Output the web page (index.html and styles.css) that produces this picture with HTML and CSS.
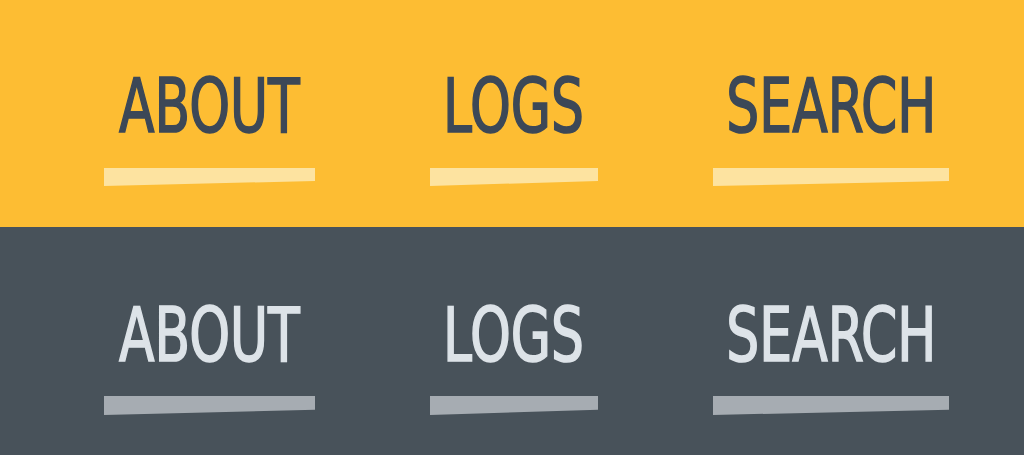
FILE: index.html
```html
<!DOCTYPE html>
<html>
<head>
    <title>Menu Underlines</title>
    <link rel="stylesheet" href="styles.css">
</head>
<body>
<nav class="band band-light">
    <a class="item item-about" href="#about"><span class="label">ABOUT</span><span class="bar"></span></a>
    <a class="item item-logs" href="#logs"><span class="label">LOGS</span><span class="bar"></span></a>
    <a class="item item-search" href="#search"><span class="label">SEARCH</span><span class="bar"></span></a>
</nav>

<nav class="band band-dark">
    <a class="item item-about" href="#about"><span class="label">ABOUT</span><span class="bar"></span></a>
    <a class="item item-logs" href="#logs"><span class="label">LOGS</span><span class="bar"></span></a>
    <a class="item item-search" href="#search"><span class="label">SEARCH</span><span class="bar"></span></a>
</nav>
</body>
</html>
```

FILE: styles.css
```css
html, body {
    margin: 0;
    padding: 0;
}

body {
    width: 1024px;
    height: 455px;
    overflow: hidden;
    font-family: "DejaVu Sans Condensed", "DejaVu Sans", sans-serif;
    font-stretch: condensed;
}

.band {
    display: flex;
    gap: 115px;
    height: 227px;
    padding: 69px 0 0 104px;
    box-sizing: border-box;
}

.band-light {
    background-color: #fdbd33;
}

.band-dark {
    height: 228px;
    padding-top: 71px;
    background-color: #48525a;
}

.item {
    display: flex;
    flex-direction: column;
    align-items: center;
    text-decoration: none;
}

.item-about { width: 211px; }
.item-logs { width: 168px; }
.item-search { width: 236px; }

.label {
    font-size: 75px;
    line-height: 75px;
    transform: scaleX(0.77);
    white-space: nowrap;
    -webkit-text-stroke: 1.6px currentColor;
}

.band-light .label { color: #3c4857; }
.band-dark .label { color: #dde3e8; }

/* slanted marker stroke under each link */
.bar {
    display: block;
    align-self: stretch;
    height: 18px;
    margin-top: 24px;
    clip-path: polygon(0 0, 100% 0, 100% 72%, 0 100%);
}

.band-dark .bar {
    height: 19px;
    margin-top: 23px;
}

.band-light .bar { background-color: #fde3a0; }
.band-dark .bar { background-color: #a6acb2; }
```
